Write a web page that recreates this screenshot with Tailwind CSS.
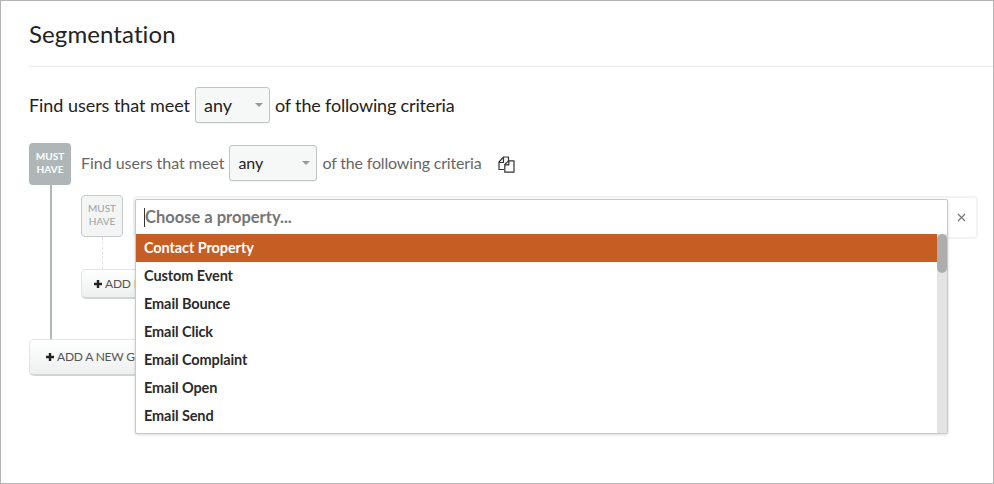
<!DOCTYPE html>
<html>
<head>
<meta charset="utf-8">
<script src="https://cdn.jsdelivr.net/npm/@tailwindcss/browser@4"></script>
</head>
<body class="bg-white">
<div class="w-[994px] h-[484px] border border-[#b5b5b5] overflow-hidden bg-white text-[#222] font-['Lato','Open_Sans',sans-serif] pl-[28px]">
  <!-- Title -->
  <div class="h-[66px] border-b border-[#eaeaea] flex items-center">
    <h1 class="text-[24px] leading-none tracking-[0.1px]">Segmentation</h1>
  </div>

  <!-- Top criteria -->
  <div class="flex items-center h-[36px] mt-[20px] text-[18px] gap-[5px]">
    <span class="tracking-[-0.05px]">Find users that meet</span>
    <div class="w-[75px] h-[36px] rounded-[3px] border border-[#bfc4c4] bg-[#f6f7f7] shadow-[0_1px_1px_rgba(0,0,0,0.06)] flex items-center justify-between pl-[8px] pr-[6px]">
      <span>any</span>
      <span class="w-0 h-0 border-x-[4.5px] border-x-transparent border-t-[4.5px] border-t-[#999]"></span>
    </div>
    <span class="tracking-[-0.17px]">of the following criteria</span>
  </div>

  <!-- Group -->
  <div class="mt-[20px] relative">
    <div class="flex">
      <div class="flex flex-col w-[42px] shrink-0">
        <div class="w-[42px] h-[42px] rounded-[4px] bg-[#aeb6b7] text-white text-[10px] leading-[13px] font-bold flex items-center justify-center text-center pb-[2px]">MUST<br>HAVE</div>
        <div class="ml-[21px] w-[2px] h-[154px] bg-[#b0b6b7]"></div>
      </div>

      <div class="ml-[10px] flex-1">
        <div class="flex items-center h-[36px] mt-[3px] text-[16px] text-[#666] gap-[5px] -translate-y-px">
          <span class="tracking-[-0.03px]">Find users that meet</span>
          <div class="w-[88px] h-[36px] rounded-[3px] border border-[#bfc4c4] bg-[#f6f7f7] shadow-[0_1px_1px_rgba(0,0,0,0.06)] text-[#222] flex items-center justify-between pl-[8px] pr-[6px]">
            <span>any</span>
            <span class="w-0 h-0 border-x-[4.5px] border-x-transparent border-t-[4.5px] border-t-[#999]"></span>
          </div>
          <span class="tracking-[-0.17px]">of the following criteria</span>
          <svg class="ml-[12px] mt-[2px]" width="17" height="17" viewBox="0 0 17 17" fill="none" stroke="#333" stroke-width="1.2" stroke-linejoin="round">
            <path d="M6 13.5H1V6L5.5 1H10.5V5"/>
            <path d="M1 6.5H5.5V1.5"/>
            <path d="M6.8 8.5L10.5 4.8H16V16.2H6.8Z" fill="#fff"/>
            <path d="M6.8 8.8H10.8V4.8"/>
          </svg>
        </div>

        <!-- Rule -->
        <div class="flex mt-[13px] relative">
          <div class="flex flex-col w-[42px] shrink-0">
            <div class="w-[42px] h-[42px] rounded-[4px] bg-[#f3f5f5] border border-[#c3cbcb] text-[#97a1a2] text-[10px] leading-[13px] flex items-center justify-center text-center pb-[2px]">MUST<br>HAVE</div>
            <div class="ml-[21px] h-[32px] border-l border-dashed border-[#e3e3e3]"></div>
          </div>
          <div class="ml-[10px] w-[845px] h-[43px] mt-[1px] rounded-[4px] border-2 border-[#f3f3f3] flex items-center justify-end pr-[10px]">
            <svg width="9" height="9" viewBox="0 0 9 9" stroke="#777" stroke-width="1.2"><path d="M1 1L8 8M8 1L1 8"/></svg>
          </div>
        </div>

        <div class="w-[110px] h-[30px] rounded-[5px] border border-[#e2e5e5] border-b-2 border-b-[#d0d5d5] bg-gradient-to-b from-white to-[#eef0f0] flex items-center pl-[12px] text-[12px] text-[#555] tracking-[-0.2px]">
          <svg class="mr-[3px]" width="8" height="8" viewBox="0 0 8 8" stroke="#222" stroke-width="2.4"><path d="M4 0V8M0 4H8"/></svg>ADD RULE
        </div>
      </div>
    </div>

    <div class="w-[160px] h-[37px] rounded-[5px] border border-[#e2e5e5] border-b-2 border-b-[#d0d5d5] bg-gradient-to-b from-white to-[#eef0f0] flex items-center pl-[16px] text-[12px] text-[#555] tracking-[-0.2px]">
      <svg class="mr-[3px]" width="8" height="8" viewBox="0 0 8 8" stroke="#222" stroke-width="2.4"><path d="M4 0V8M0 4H8"/></svg>ADD A NEW GROUP
    </div>

    <!-- Property dropdown, sits over the rule and buttons -->
    <div class="absolute left-[106px] top-[56px] w-[813px] h-[235px] bg-white border border-[#c8c8c8] rounded-[2px] shadow-[0_1px_3px_rgba(0,0,0,0.15)] overflow-hidden">
      <div class="h-[34px] flex items-center pl-[8px] text-[16.5px] font-bold text-[#757575]">
        <span class="w-px h-[19px] bg-[#333]"></span>Choose a property...
      </div>
      <div class="relative h-[199px]">
        <div class="absolute right-0 top-0 bottom-0 w-[10px] bg-[#e4e4e4]">
          <div class="w-[10px] h-[39px] rounded-full bg-[#adadad]"></div>
        </div>
        <ul class="text-[14.5px] font-bold leading-[28px] text-[#2b2b2b] pr-[10px] tracking-[-0.1px]">
          <li class="bg-[#c65d23] text-white pl-[8px]">Contact Property</li>
          <li class="pl-[8px]">Custom Event</li>
          <li class="pl-[8px]">Email Bounce</li>
          <li class="pl-[8px]">Email Click</li>
          <li class="pl-[8px]">Email Complaint</li>
          <li class="pl-[8px]">Email Open</li>
          <li class="pl-[8px]">Email Send</li>
        </ul>
      </div>
    </div>
  </div>
</div>
</body>
</html>
